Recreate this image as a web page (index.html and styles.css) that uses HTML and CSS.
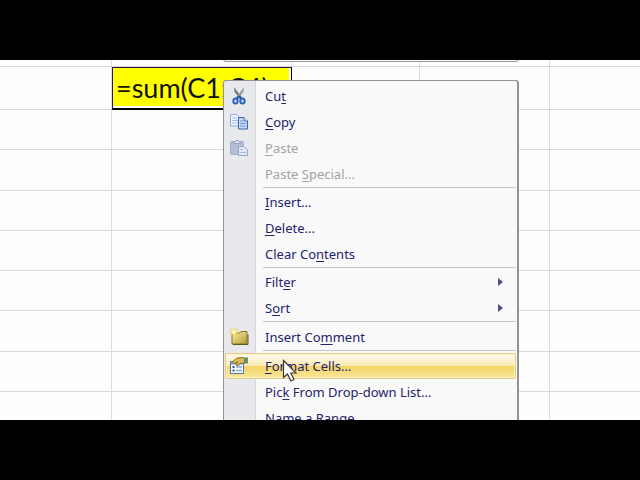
FILE: index.html
```html
<!DOCTYPE html>
<html lang="en">
<head>
    <meta charset="UTF-8">
    <meta name="viewport" content="width=device-width, initial-scale=1.0">
    <title>Format Cells</title>
    <link rel="stylesheet" href="styles.css">
</head>
<body>
    <main class="sheet">
        <table class="grid">
            <colgroup>
                <col class="col-a"><col class="col-b"><col class="col-c"><col class="col-d"><col>
            </colgroup>
            <tbody>
                <tr class="row-cut"><td></td><td></td><td></td><td></td><td></td></tr>
                <tr class="row-tall"><td></td><td class="active">=sum(C1:C4)</td><td></td><td></td><td></td></tr>
                <tr><td></td><td></td><td></td><td></td><td></td></tr>
                <tr><td></td><td></td><td></td><td></td><td></td></tr>
                <tr><td></td><td></td><td></td><td></td><td></td></tr>
                <tr><td></td><td></td><td></td><td></td><td></td></tr>
                <tr><td></td><td></td><td></td><td></td><td></td></tr>
                <tr><td></td><td></td><td></td><td></td><td></td></tr>
                <tr><td></td><td></td><td></td><td></td><td></td></tr>
                <tr><td></td><td></td><td></td><td></td><td></td></tr>
            </tbody>
        </table>

        <div class="mini-toolbar"></div>

        <ul class="menu">
            <li><button class="item">
                <svg class="icon" viewBox="0 0 20 20">
                    <path d="M5 1 L5.500 6 L10.500 12 L12.500 11z" fill="#777b84"/>
                    <path d="M15 1 L14.500 6 L9.500 12 L7.500 11z" fill="#9b9ea6"/>
                    <path d="M10 10 L7.500 13 M10 10 L12.500 13" stroke="#3159a5" stroke-width="2.500"/>
                    <ellipse cx="6.500" cy="15" rx="2.200" ry="2.500" fill="#d7e2f5" stroke="#3565b8" stroke-width="2"/>
                    <ellipse cx="13.500" cy="15" rx="2.200" ry="2.500" fill="#d7e2f5" stroke="#3565b8" stroke-width="2"/>
                </svg>
                <span>Cu<u>t</u></span>
            </button></li>
            <li><button class="item">
                <svg class="icon" viewBox="0 0 20 20">
                    <path d="M1.500 2.500h6l3.500 3.500v8h-9.500z" fill="#edf4ff" stroke="#92abd4"/>
                    <path d="M3 6h5M3 8.500h6M3 11h6" stroke="#a5bfe8"/>
                    <path d="M9.500 5.500h5.500l3.500 3.500v8h-9z" fill="#c9dcfa" stroke="#3e62a8"/>
                    <path d="M15 5.500v3.500h3.500" fill="#fff" stroke="#3e62a8"/>
                    <path d="M11 9h3M11 11.500h6M11 14h6" stroke="#6e94d6"/>
                </svg>
                <span><u>C</u>opy</span>
            </button></li>
            <li><button class="item" disabled>
                <svg class="icon" viewBox="0 0 20 20">
                    <rect x="1.500" y="3.500" width="13" height="13" rx="1" fill="#b2bfd6" stroke="#a3b1cb"/>
                    <path d="M4.500 5.500v-2h2q1.500-3 3 0h2v2z" fill="#dde3ed" stroke="#91a0b9"/>
                    <path d="M9.500 8.500h5.500l3.500 3.500v5.500h-9z" fill="#e1e9f6" stroke="#91a4c6"/>
                    <path d="M11 11.500h3M11 14.500h6" stroke="#acbbd4"/>
                </svg>
                <span><u>P</u>aste</span>
            </button></li>
            <li><button class="item" disabled><span>Paste <u>S</u>pecial...</span></button></li>
            <li class="separator"></li>
            <li><button class="item"><span><u>I</u>nsert...</span></button></li>
            <li><button class="item"><span><u>D</u>elete...</span></button></li>
            <li><button class="item"><span>Clear Co<u>n</u>tents</span></button></li>
            <li class="separator"></li>
            <li><button class="item submenu"><span>Filt<u>e</u>r</span></button></li>
            <li><button class="item submenu"><span>S<u>o</u>rt</span></button></li>
            <li class="separator"></li>
            <li><button class="item">
                <svg class="icon" viewBox="0 0 20 20">
                    <defs>
                        <linearGradient id="note" x1="0" y1="0" x2="1" y2="1">
                            <stop offset="0" stop-color="#fbf0a0"/>
                            <stop offset="1" stop-color="#b39a37"/>
                        </linearGradient>
                    </defs>
                    <path d="M3 6h8l1-1.500h6v12.500h-15z" fill="url(#note)" stroke="#8a7727"/>
                    <path d="M4 17.500h15v-10" fill="none" stroke="#625827"/>
                    <path d="M5 0v10M0 5h10M1.500 1.500l7 7M8.500 1.500l-7 7" stroke="#f0d960" stroke-width="1.200"/>
                    <circle cx="5" cy="5" r="2" fill="#fffbd0"/>
                </svg>
                <span>Insert Co<u>m</u>ment</span>
            </button></li>
            <li class="separator"></li>
            <li class="current"><button class="item">
                <svg class="icon" viewBox="0 0 20 20">
                    <rect x="1.500" y="5.500" width="13" height="12" fill="#f4f8ff" stroke="#5578ae"/>
                    <path d="M2 7h12" stroke="#7da0d5" stroke-width="3"/>
                    <path d="M3.500 11h2M3.500 14.500h2" stroke="#37588e" stroke-width="2"/>
                    <path d="M7 11h6M7 14.500h6" stroke="#94add3" stroke-width="1.500"/>
                    <path d="M3 6 L8 2 L14 1.500 L16 3 L16 7 L11 7.500 L9 10 L7 9 L9 6 L5 7.500z" fill="#dfb853" stroke="#8a702b"/>
                    <path d="M15 1.500h4v6h-4z" fill="#5d9170"/>
                </svg>
                <span><u>F</u>ormat Cells...</span>
            </button>
                <svg class="pointer" viewBox="0 0 16 24">
                    <path d="M1.500 1.500v17l4-3.500 3.500 7 3-1.500-3.200-6.500h5.200z" fill="#fff" stroke="#383838" stroke-width="1.200"/>
                </svg>
            </li>
            <li><button class="item"><span>Pic<u>k</u> From Drop-down List...</span></button></li>
            <li><button class="item"><span>Name a <u>R</u>ange...</span></button></li>
        </ul>
    </main>
</body>
</html>
```

FILE: styles.css
```css
* {
    box-sizing: border-box;
}

body {
    margin: 0;
    padding: 60px 0;
    height: 100vh;
    background: #000;
    font-family: "Noto Sans", "Open Sans", sans-serif;
}

.sheet {
    position: relative;
    height: 100%;
    overflow: hidden;
    background: #fefefe;
}

/* worksheet */
.grid {
    width: 100%;
    table-layout: fixed;
    border-collapse: separate;
    border-spacing: 0;
}

.col-a {
    width: 112px;
}

.col-b {
    width: 180px;
}

.col-c {
    width: 128px;
}

.col-d {
    width: 130px;
}

.grid tr {
    height: 40px;
}

.grid tr:nth-child(4n) {
    height: 41px;
}

.grid .row-cut {
    height: 7px;
}

.grid .row-tall {
    height: 43px;
}

.grid td {
    padding: 0;
    border-right: 1px solid #dcdde1;
    border-bottom: 1px solid #d8d9dd;
}

.grid td:last-child {
    border-right: 0;
}

.grid .active {
    padding: 0 3px;
    background: #ff0;
    border: 1px solid #2b1255;
    border-right-color: #000;
    border-bottom: 2px solid #000;
    box-shadow: inset -2px -2px #fff;
    color: #111;
    font-family: Lato, sans-serif;
    font-size: 27px;
    line-height: 40px;
    white-space: nowrap;
}

/* popups */
.mini-toolbar {
    position: absolute;
    top: -30px;
    left: 223px;
    width: 296px;
    height: 32px;
    background: #f4f4f4;
    border: 1px solid #9a9a9a;
    border-radius: 3px;
}

.menu {
    position: absolute;
    top: 20px;
    left: 223px;
    width: 296px;
    margin: 0;
    padding: 2px 1px;
    list-style: none;
    background: linear-gradient(to right, #e7e9ec 31px, #d4d5d7 31px, #d4d5d7 32px, #f9f9f9 32px);
    border: 1px solid #939393;
    border-right-width: 2px;
    border-radius: 3px;
}

.menu li {
    position: relative;
}

.item {
    display: flex;
    align-items: center;
    width: 100%;
    height: 26px;
    padding: 0 12px 0 39px;
    border: 1px solid transparent;
    border-radius: 2px;
    background: none;
    color: #23236b;
    font-family: inherit;
    font-size: 13px;
    line-height: 18px;
    text-align: left;
}

.item:disabled {
    color: #a3a3a3;
}

.item u {
    text-underline-offset: 2px;
}

.icon {
    width: 20px;
    height: 20px;
    margin-left: -36px;
    margin-right: 16px;
}

.submenu {
    justify-content: space-between;
}

.submenu::after {
    content: "";
    border: 4px solid transparent;
    border-left: 5px solid #4b4f83;
    border-right: 0;
}

.separator {
    height: 2px;
    margin-left: 38px;
    border-top: 1px solid #c4c5c7;
}

/* the lower groups sit a little looser */
.separator ~ .separator ~ .separator {
    height: 3px;
}

.current .item {
    border-color: #e4cd84;
    background: linear-gradient(#fffdf0, #fbeab5 48%, #f5d566 52%, #fae69a);
    box-shadow: inset 0 0 1px 1px #fdf3c8;
}

.pointer {
    position: absolute;
    top: 6px;
    left: 57px;
    width: 16px;
    height: 24px;
    z-index: 1;
}
```
